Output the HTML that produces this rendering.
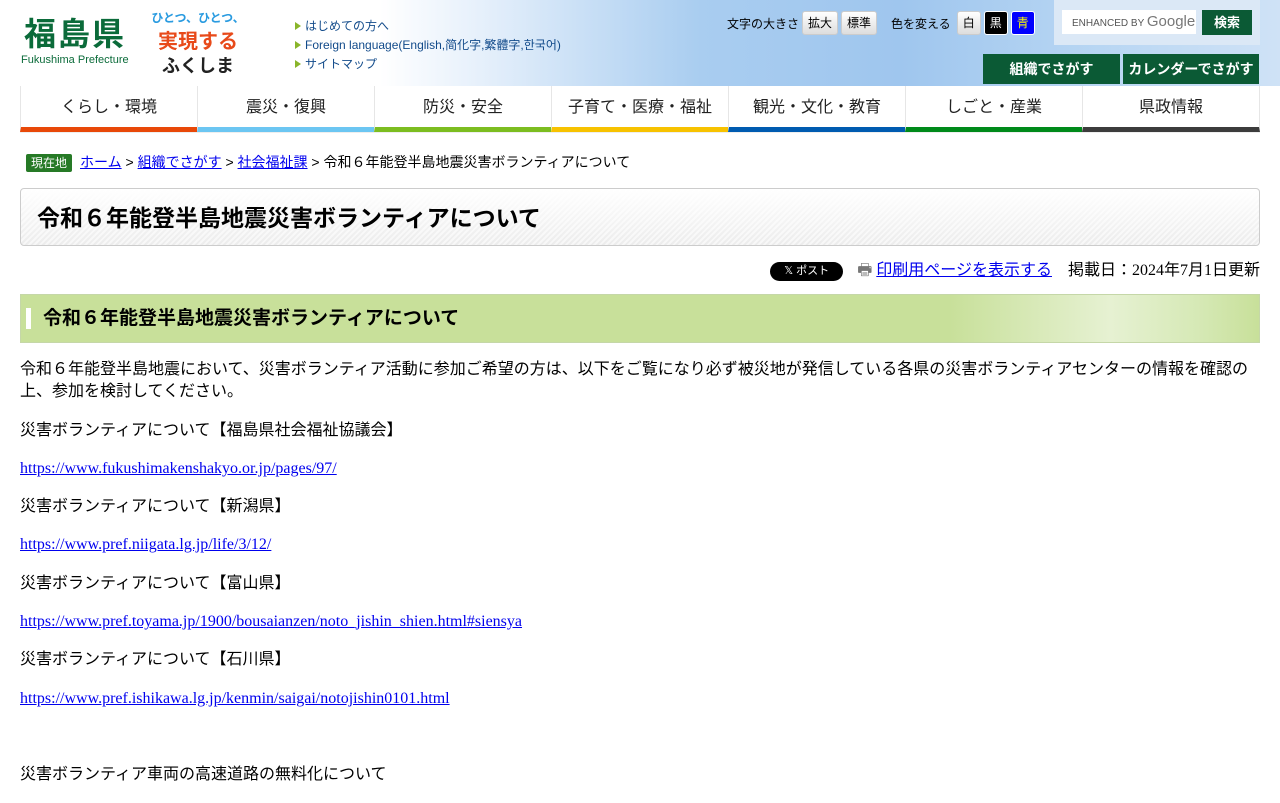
<!DOCTYPE html>
<html><head><meta charset="utf-8"><style>
*{box-sizing:border-box}
body{margin:0;font-family:"Liberation Sans","Noto Sans CJK JP",sans-serif;color:#000;background:#fff;width:1280px;overflow:hidden}
#hd{position:relative;height:86px;background:linear-gradient(90deg,#fff 0,#fff 380px,#e6f0fb 480px,#a9cdf0 700px,#9fc6ee 900px,#b8d6f3 1100px,#cfe2f6 1280px)}
.logo{position:absolute;left:24px;top:16px;color:#0b6b3a;font-size:32px;font-weight:bold;letter-spacing:2px;line-height:36px}
.logo small{display:block;font-size:11px;font-weight:normal;letter-spacing:0;color:#0b6b3a;line-height:12px;margin-left:-3px;margin-top:2px}
.slog{position:absolute;left:148px;top:6px;width:100px;height:72px;font-size:14px;font-weight:bold;line-height:24px;text-align:center;white-space:nowrap;overflow:hidden}
.slog span{display:block}
.slog span:nth-child(1){color:#2a9be0;font-size:12px}.slog span:nth-child(2){color:#e84a1a;font-size:20px}.slog span:nth-child(3){color:#222;font-size:18px}
.ln{position:absolute;left:295px;top:17px;font-size:12px;color:#114a8a;line-height:19px}
.ln div:before{content:"";display:inline-block;border-left:6px solid #8ab52a;border-top:4px solid transparent;border-bottom:4px solid transparent;margin-right:4px}
.tool{position:absolute;top:10px;left:727px;font-size:12px;display:flex;align-items:center;height:26px}
.b{display:inline-block;height:24px;line-height:22px;padding:0 5px;border:1px solid #ccc;border-radius:3px;background:linear-gradient(#fff,#ddd);margin-left:3px;font-size:12px}
.sbox{position:absolute;left:1054px;top:0;width:206px;height:45px;background:#dbe8f6}
.sin{position:absolute;left:1062px;top:10px;width:134px;height:24px;background:#fff;font-size:10px;color:#555;line-height:24px;padding-left:10px;white-space:nowrap;overflow:hidden}
.sin b{font-size:15px;color:#777;font-weight:normal}
.sbt{position:absolute;left:1202px;top:10px;width:50px;height:25px;background:#0b5a35;color:#fff;font-size:13px;font-weight:bold;text-align:center;line-height:25px}
.gb{position:absolute;top:54px;height:30px;background:#0b5a35;color:#fff;font-size:14px;font-weight:bold;text-align:center;line-height:30px}
#nav{display:flex;margin-left:20px;width:1240px;height:47px;border-bottom:1px solid #eee}
#nav div{flex:1;text-align:center;font-size:16px;line-height:44px;border-left:1px solid #e6e6e6;color:#222}
#nav div:last-child{border-right:1px solid #e6e6e6}
.main{padding:0 20px}
.bc{margin-top:19px;font-size:14px;height:20px;line-height:20px}
.bc .h{display:inline-block;background:#267a26;color:#fff;font-size:12px;padding:0 5px;border-radius:2px;margin:0 8px 0 6px;line-height:18px}
a{color:#00e;text-decoration:underline}
h1{margin:16px 0 0;height:58px;border:1px solid #ccc;border-radius:4px;background:linear-gradient(180deg,#fff 0,rgba(255,255,255,.3) 100%),repeating-linear-gradient(135deg,#f4f4f4 0 2px,#e4e4e4 2px 4px);font-size:23px;line-height:58px;padding-left:16px;font-weight:bold}
.meta{text-align:right;margin-top:15px;font-size:16px;height:20px;line-height:20px;font-family:"Liberation Serif","Noto Sans CJK JP",serif}
.x{display:inline-block;background:#000;color:#fff;border-radius:10px;font-size:11px;padding:0 14px;line-height:19px;vertical-align:1px;margin-right:14px;font-family:"Liberation Sans","Noto Sans CJK JP",sans-serif}
h2{margin:13px 0 0;height:49px;border:1px solid #c5d7a8;background:linear-gradient(90deg,#c8e09a 0,#c8e09a 75%,#e6f1d2 88%,#d6e9b6 95%,#c8e09a 100%);font-size:19px;line-height:47px;padding-left:22px;position:relative}
h2:before{content:"";position:absolute;left:5px;top:13px;width:5px;height:21px;background:#fff}
p{margin:16px 0;font-size:16px;line-height:22.3px}
p.u{font-family:"Liberation Serif",serif}
</style></head><body>
<div id="hd">
<div class="logo">福島県<small>Fukushima Prefecture</small></div>
<div class="slog"><span>ひとつ、ひとつ、</span><span>実現する</span><span>ふくしま</span></div>
<div class="ln"><div>はじめての方へ</div><div>Foreign language(English,简化字,繁體字,한국어)</div><div>サイトマップ</div></div>
<div class="tool">文字の大きさ<span class="b">拡大</span><span class="b">標準</span><span style="margin-left:14px">色を変える</span><span class="b" style="margin-left:6px">白</span><span class="b" style="background:#000;color:#fff;border-color:#fff">黒</span><span class="b" style="background:#00f;color:#ff0;border-color:#fff">青</span></div>
<div class="sbox"></div>
<div class="sin">ENHANCED BY <b>Google</b></div>
<div class="sbt">検索</div>
<div class="gb" style="left:983px;width:137px">組織でさがす</div>
<div class="gb" style="left:1123px;width:136px">カレンダーでさがす</div>
</div>
<div id="nav">
<div style="border-bottom:5px solid #e84808">くらし・環境</div>
<div style="border-bottom:5px solid #6cc6f2">震災・復興</div>
<div style="border-bottom:5px solid #7cbd20">防災・安全</div>
<div style="border-bottom:5px solid #f7c200">子育て・医療・福祉</div>
<div style="border-bottom:5px solid #005bb0">観光・文化・教育</div>
<div style="border-bottom:5px solid #008a1a">しごと・産業</div>
<div style="border-bottom:5px solid #3c3c3c">県政情報</div>
</div>
<div class="main">
<div class="bc"><span class="h">現在地</span><a>ホーム</a> &gt; <a>組織でさがす</a> &gt; <a>社会福祉課</a> &gt; 令和６年能登半島地震災害ボランティアについて</div>
<h1>令和６年能登半島地震災害ボランティアについて</h1>
<div class="meta"><span class="x">𝕏 ポスト</span><span style="color:#777">🖶</span> <a>印刷用ページを表示する</a>　掲載日：2024年7月1日更新</div>
<h2>令和６年能登半島地震災害ボランティアについて</h2>
<p>令和６年能登半島地震において、災害ボランティア活動に参加ご希望の方は、以下をご覧になり必ず被災地が発信している各県の災害ボランティアセンターの情報を確認の上、参加を検討してください。</p>
<p>災害ボランティアについて【福島県社会福祉協議会】</p>
<p class="u"><a>https://www.fukushimakenshakyo.or.jp/pages/97/</a></p>
<p>災害ボランティアについて【新潟県】</p>
<p class="u"><a>https://www.pref.niigata.lg.jp/life/3/12/</a></p>
<p>災害ボランティアについて【富山県】</p>
<p class="u"><a>https://www.pref.toyama.jp/1900/bousaianzen/noto_jishin_shien.html#siensya</a></p>
<p>災害ボランティアについて【石川県】</p>
<p class="u"><a>https://www.pref.ishikawa.lg.jp/kenmin/saigai/notojishin0101.html</a></p>
<p>&nbsp;</p>
<p>災害ボランティア車両の高速道路の無料化について</p>
</div>
</body></html>
